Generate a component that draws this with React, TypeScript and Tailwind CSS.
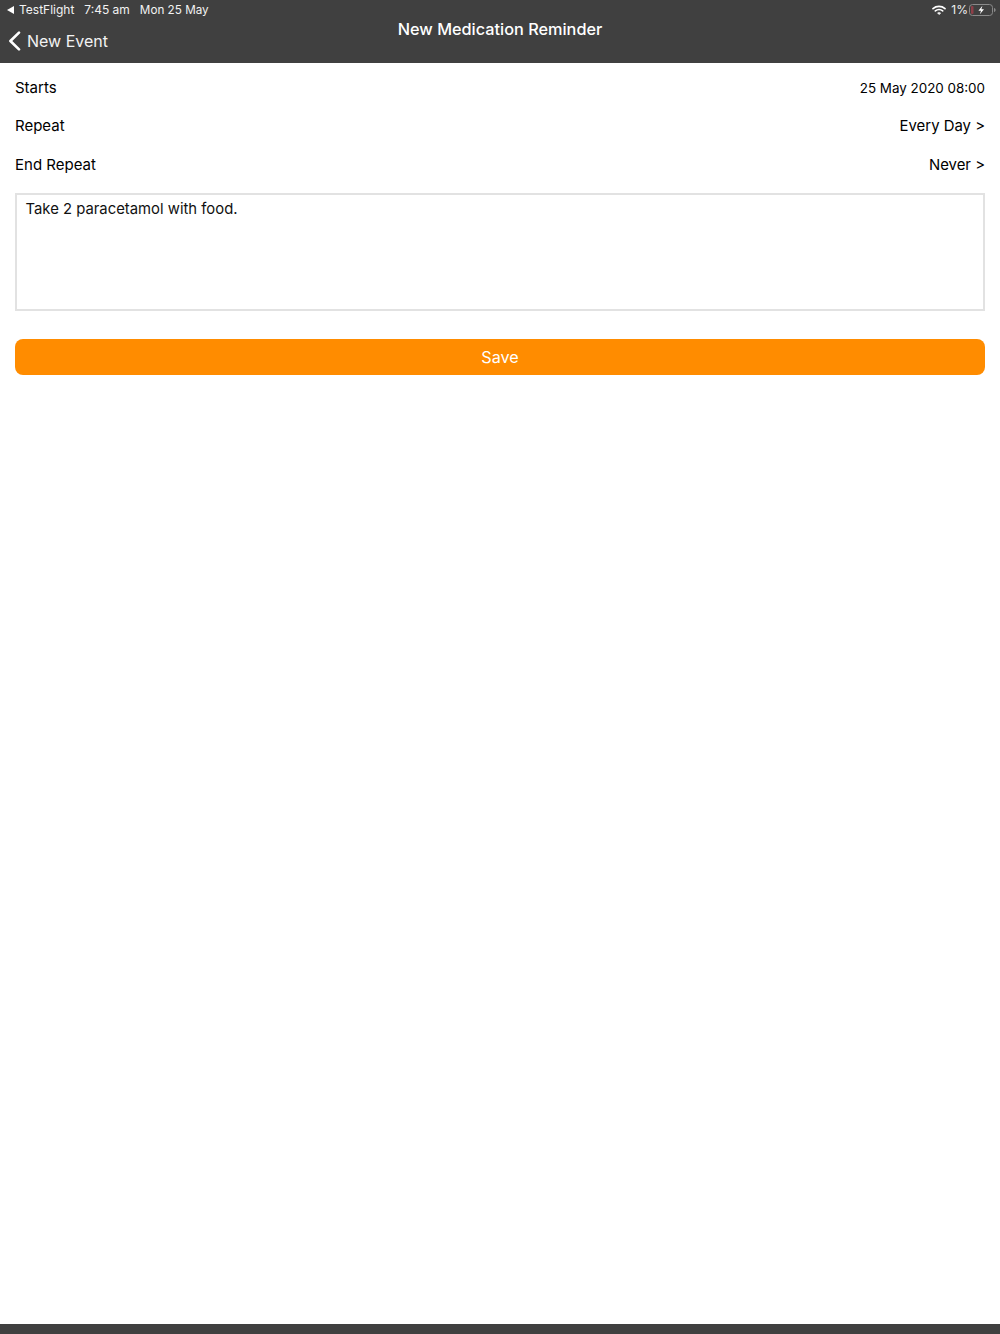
const rows = [
  { label: 'Starts', value: '25 May 2020 08:00', small: true },
  { label: 'Repeat', value: 'Every Day >', small: false },
  { label: 'End Repeat', value: 'Never >', small: false },
];

function WifiIcon() {
  return (
    <svg width="14" height="10" viewBox="0 0 14 10" fill="none" stroke="#fff" strokeLinecap="round">
      <path d="M1 3.6C4.4 0.6 9.6 0.6 13 3.6" strokeWidth="1.7" />
      <path d="M3.3 5.9C5.4 4.1 8.6 4.1 10.7 5.9" strokeWidth="1.6" />
      <path d="M7 9.4L5.5 7.9C6.4 7.2 7.6 7.2 8.5 7.9Z" fill="#fff" strokeWidth="0.6" />
    </svg>
  );
}

function BatteryIcon() {
  return (
    <svg width="27" height="12" viewBox="0 0 27 12" fill="none">
      <rect x="0.5" y="0.5" width="23" height="11" rx="3" stroke="#8a8a8a" />
      <rect x="2" y="2" width="2.5" height="8" rx="1" fill="#8f3f48" />
      <path d="M25 4v4c1-.3 1.6-1.1 1.6-2S26 4.3 25 4Z" fill="#8a8a8a" />
      <path d="M13.4 1.8L9.4 6.7H12L10.9 10.2L15 5.2H12.4Z" fill="#fff" />
    </svg>
  );
}

export default function App() {
  return (
    <div className="flex h-[1334px] flex-col bg-white font-['Inter',sans-serif] text-black">
      {/* Nav bar */}
      <header className="relative h-[63px] shrink-0 bg-[#404040] text-white">
        <div className="flex h-[20px] items-center justify-between pl-[7px] pr-[4px] text-[12px] leading-[20px] text-[#f2f2f2]">
          <div className="flex items-center">
            <span className="mr-[5px] h-0 w-0 border-y-[4px] border-r-[7px] border-y-transparent border-r-white" />
            <span>TestFlight</span>
            <span className="ml-[10px]">7:45 am</span>
            <span className="ml-[10px] text-[11.7px]">Mon 25 May</span>
          </div>
          <div className="flex items-center">
            <WifiIcon />
            <span className="ml-[5px] mr-[1px]">1%</span>
            <BatteryIcon />
          </div>
        </div>
        <div className="flex items-center pl-[8px] pt-[1px]">
          <svg width="13" height="20" viewBox="0 0 13 20" fill="none" stroke="#fff" strokeWidth="2.6" strokeLinecap="round" strokeLinejoin="round">
            <path d="M11 1.6L2.4 10L11 18.4" />
          </svg>
          <span className="ml-[6px] text-[16px] leading-[40px] text-[#f2f2f2]">New Event</span>
        </div>
        <h1 className="absolute inset-x-0 top-[19px] text-center text-[16.3px] font-medium leading-[21px]">
          New Medication Reminder
        </h1>
      </header>

      <main className="flex-1 px-[15px] pt-[5.5px]">
        {rows.map((row) => (
          <div key={row.label} className="flex h-[38.5px] items-center justify-between text-[15px]">
            <span>{row.label}</span>
            <span className={row.small ? 'text-[13.4px]' : 'text-[14.9px]'}>{row.value}</span>
          </div>
        ))}

        <div className="mt-[8.5px] h-[118px] border-2 border-[#e2e2e2] pl-[8.5px] pt-[2px] text-[14.85px] leading-[24px] text-[#111]">
          Take 2 paracetamol with food.
        </div>

        <button className="mt-[28.5px] block h-[36px] w-full rounded-[8px] bg-[#ff8c00] pt-[1px] text-center text-[16.2px] text-[#fff]">
          Save
        </button>
      </main>

      <footer className="h-[10px] shrink-0 bg-[#404040]" />
    </div>
  );
}
